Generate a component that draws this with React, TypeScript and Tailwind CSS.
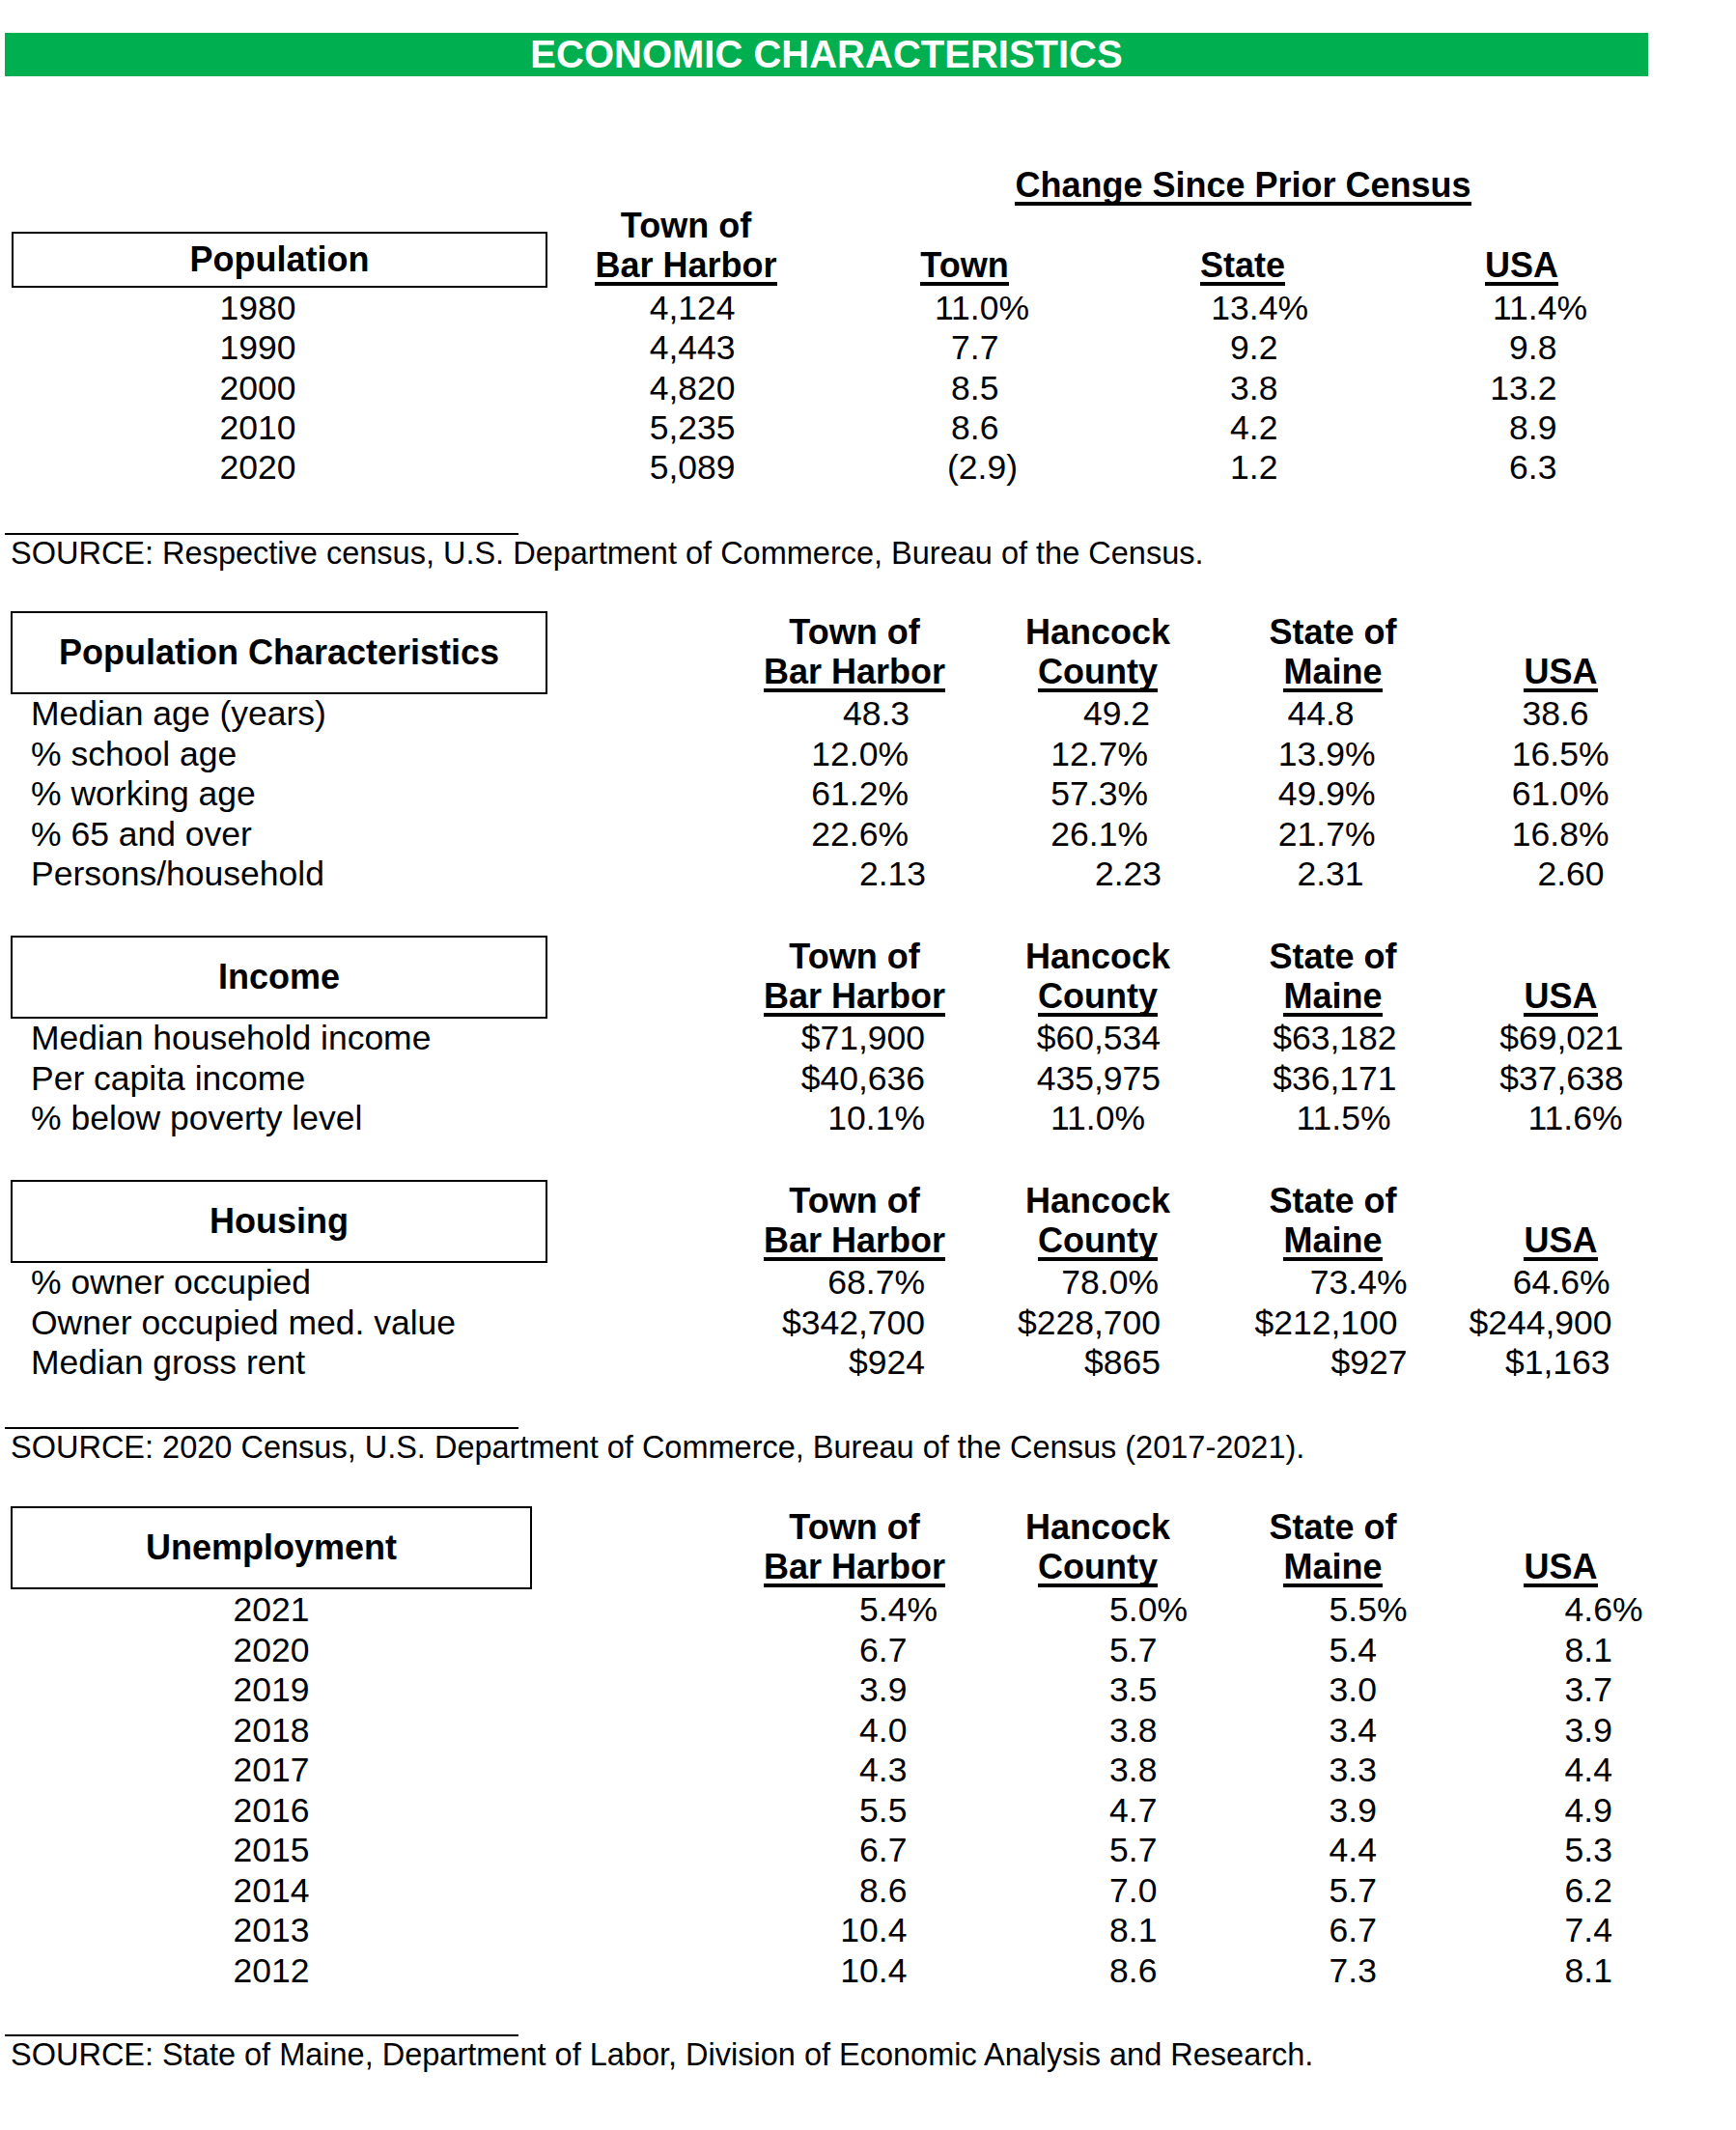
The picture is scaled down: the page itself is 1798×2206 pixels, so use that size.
type Cell = [string, string, boolean?];
type Row = { label: string; cells: Cell[] };

// value columns shared by the four lower tables
const colCls = [
  "w-[190px]",
  "ml-[62px] w-[190px]",
  "ml-[53.5px] w-[190px]",
  "ml-[46px] w-[190px]",
];

const heads = [
  ["Town of", "Bar Harbor"],
  ["Hancock", "County"],
  ["State of", "Maine"],
  ["", "USA"],
];

const popChar: Row[] = [
  { label: "Median age (years)", cells: [["48.3", "pr-[38px]"], ["49.2", "pr-[41px]"], ["44.8", "pr-[73px]"], ["38.6", "pr-[66px]"]] },
  { label: "% school age", cells: [["12.0%", "pr-[39px]"], ["12.7%", "pr-[43px]"], ["13.9%", "pr-[51px]"], ["16.5%", "pr-[45px]"]] },
  { label: "% working age", cells: [["61.2%", "pr-[39px]"], ["57.3%", "pr-[43px]"], ["49.9%", "pr-[51px]"], ["61.0%", "pr-[45px]"]] },
  { label: "% 65 and over", cells: [["22.6%", "pr-[39px]"], ["26.1%", "pr-[43px]"], ["21.7%", "pr-[51px]"], ["16.8%", "pr-[45px]"]] },
  { label: "Persons/household", cells: [["2.13", "pr-[21px]"], ["2.23", "pr-[29px]"], ["2.31", "pr-[63px]"], ["2.60", "pr-[50px]"]] },
];

const income: Row[] = [
  { label: "Median household income", cells: [["$71,900", "pr-[22px]"], ["$60,534", "pr-[30px]"], ["$63,182", "pr-[29px]"], ["$69,021", "pr-[30px]"]] },
  { label: "Per capita income", cells: [["$40,636", "pr-[22px]"], ["435,975", "pr-[30px]"], ["$36,171", "pr-[29px]"], ["$37,638", "pr-[30px]"]] },
  { label: "% below poverty level", cells: [["10.1%", "pr-[22px]"], ["11.0%", "pr-[46px]"], ["11.5%", "pr-[35px]"], ["11.6%", "pr-[31px]"]] },
];

const housing: Row[] = [
  { label: "% owner occupied", cells: [["68.7%", "pr-[22px]"], ["78.0%", "pr-[32px]"], ["73.4%", "pr-[18px]"], ["64.6%", "pr-[44px]"]] },
  { label: "Owner occupied med. value", cells: [["$342,700", "pr-[22px]"], ["$228,700", "pr-[30px]"], ["$212,100", "pr-[28px]"], ["$244,900", "pr-[44px]"]] },
  { label: "Median gross rent", cells: [["$924", "pr-[22px]"], ["$865", "pr-[30px]"], ["$927", "pr-[18px]"], ["$1,163", "pr-[44px]"]] },
];

const population = [
  ["1980", "4,124", "11.0%", "13.4%", "11.4%"],
  ["1990", "4,443", "7.7", "9.2", "9.8"],
  ["2000", "4,820", "8.5", "3.8", "13.2"],
  ["2010", "5,235", "8.6", "4.2", "8.9"],
  ["2020", "5,089", "(2.9)", "1.2", "6.3"],
];

const unemployment = [
  ["2021", "5.4%", "5.0%", "5.5%", "4.6%"],
  ["2020", "6.7", "5.7", "5.4", "8.1"],
  ["2019", "3.9", "3.5", "3.0", "3.7"],
  ["2018", "4.0", "3.8", "3.4", "3.9"],
  ["2017", "4.3", "3.8", "3.3", "4.4"],
  ["2016", "5.5", "4.7", "3.9", "4.9"],
  ["2015", "6.7", "5.7", "4.4", "5.3"],
  ["2014", "8.6", "7.0", "5.7", "6.2"],
  ["2013", "10.4", "8.1", "6.7", "7.4"],
  ["2012", "10.4", "8.6", "7.3", "8.1"],
];

const unempPad = ["pr-[9px]", "pr-[2px]", "pr-[18px]", "pr-[10px]"];
const popCls = ["w-[200px] pr-[49px]", "ml-[98.5px] w-[180px] pr-[23px]", "ml-[108px] w-[180px] pr-[22px]", "ml-[109px] w-[180px] pr-[22px]"];

// a number printed with room for a trailing % so it lines up with the percent rows
const Num = ({ v }: { v: string }) => (
  <>
    {v}
    {!v.endsWith("%") && !v.endsWith(")") && <span className="invisible">%</span>}
  </>
);

const Underlined = ({ children }: { children: React.ReactNode }) => (
  <div className="whitespace-nowrap leading-[41px]">
    <span className="inline-block border-b-4 border-black leading-[34px]">{children}</span>
  </div>
);

const HeaderCols = () => (
  <>
    {heads.map(([top, bottom], i) => (
      <div key={bottom} className={`${colCls[i]} flex flex-col items-center pb-[2px] text-[36px] font-bold`}>
        {top && <div className="whitespace-nowrap leading-[41px]">{top}</div>}
        <Underlined>{bottom}</Underlined>
      </div>
    ))}
  </>
);

const Box = ({ title, className }: { title: string; className: string }) => (
  <div className={`ml-[11px] flex items-center justify-center border-2 border-black text-[36px] font-bold ${className}`}>
    {title}
  </div>
);

const Source = ({ text, className }: { text: string; className: string }) => (
  <div className={className}>
    <div className="ml-[5px] h-[2px] w-[532px] bg-black" />
    <div className="mt-[1px] whitespace-nowrap pl-[11px] text-[32.5px] leading-[36px]">{text}</div>
  </div>
);

const Table = ({ title, rows, className }: { title: string; rows: Row[]; className: string }) => (
  <section className={className}>
    <div className="flex items-end">
      <div className="w-[790px]">
        <Box title={title} className="h-[86px] w-[556px]" />
      </div>
      <HeaderCols />
    </div>
    {rows.map((r) => (
      <div key={r.label} className="flex h-[41.5px] whitespace-nowrap text-[35.5px] leading-[41.5px]">
        <div className="w-[790px] pl-[32px]">{r.label}</div>
        {r.cells.map(([v, pr], i) => (
          <div key={i} className={`${colCls[i]} text-right ${pr}`}>
            {v}
          </div>
        ))}
      </div>
    ))}
  </section>
);

const App = () => {
  return (
    <div className="min-h-[2206px] w-[1798px] bg-white pt-[34px] font-['Liberation_Sans',Arial,sans-serif] text-black">
      <div className="ml-[5px] h-[45px] w-[1702px] bg-[#00b050] text-center text-[40px] font-bold leading-[45px] text-white">
        ECONOMIC CHARACTERISTICS
      </div>

      {/* Population */}
      <section className="mt-[92px]">
        <div className="ml-[909px] flex w-[757px] justify-center text-[36px] font-bold">
          <Underlined>Change Since Prior Census</Underlined>
        </div>
        <div className="flex items-end">
          <div className="w-[610.5px]">
            <div className="ml-[12px] flex h-[58px] w-[555px] items-center justify-center border-2 border-black text-[36px] font-bold">
              Population
            </div>
          </div>
          <div className="flex w-[200px] flex-col items-center pb-[2px] text-[36px] font-bold">
            <div className="whitespace-nowrap leading-[41px]">Town of</div>
            <Underlined>Bar Harbor</Underlined>
          </div>
          <div className="ml-[98.5px] flex w-[180px] flex-col items-center pb-[2px] text-[36px] font-bold">
            <Underlined>Town</Underlined>
          </div>
          <div className="ml-[108px] flex w-[180px] flex-col items-center pb-[2px] text-[36px] font-bold">
            <Underlined>State</Underlined>
          </div>
          <div className="ml-[109px] flex w-[180px] flex-col items-center pb-[2px] text-[36px] font-bold">
            <Underlined>USA</Underlined>
          </div>
        </div>
        <div className="pt-[1px]">
          {population.map(([year, ...vals]) => (
            <div key={year} className="flex h-[41.25px] whitespace-nowrap text-[35.5px] leading-[41.25px]">
              <div className="w-[610.5px] pl-[12px] pr-[88.5px] text-center">{year}</div>
              {vals.map((v, i) => (
                <div key={i} className={`${popCls[i]} text-right ${v === "(2.9)" ? "!pr-[35px]" : ""}`}>
                  {i === 0 ? v : <Num v={v} />}
                </div>
              ))}
            </div>
          ))}
        </div>
      </section>

      <Source className="mt-[47px]" text="SOURCE: Respective census, U.S. Department of Commerce, Bureau of the Census." />

      <Table className="mt-[42px]" title="Population Characteristics" rows={popChar} />
      <Table className="mt-[42.5px]" title="Income" rows={income} />
      <Table className="mt-[42.5px]" title="Housing" rows={housing} />

      <Source className="mt-[45.5px]" text="SOURCE: 2020 Census, U.S. Department of Commerce, Bureau of the Census (2017-2021)." />

      {/* Unemployment */}
      <section className="mt-[43px]">
        <div className="flex items-end">
          <div className="w-[790px]">
            <Box title="Unemployment" className="h-[86px] w-[540px]" />
          </div>
          <HeaderCols />
        </div>
        <div className="pt-[1px]">
          {unemployment.map(([year, ...vals]) => (
            <div key={year} className="flex h-[41.5px] whitespace-nowrap text-[35.5px] leading-[41.5px]">
              <div className="w-[790px]">
                <div className="ml-[11px] w-[540px] text-center">{year}</div>
              </div>
              {vals.map((v, i) => (
                <div key={i} className={`${colCls[i]} text-right ${unempPad[i]}`}>
                  <Num v={v} />
                </div>
              ))}
            </div>
          ))}
        </div>
      </section>

      <Source className="mt-[45px]" text="SOURCE: State of Maine, Department of Labor, Division of Economic Analysis and Research." />
    </div>
  );
};

export default App;
